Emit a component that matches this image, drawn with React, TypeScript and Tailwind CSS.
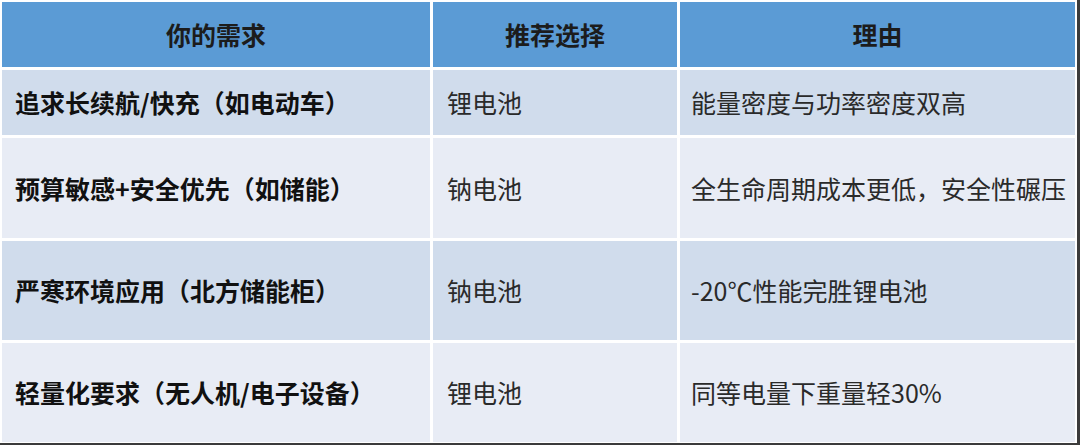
const rows = [
  { need: "追求长续航/快充（如电动车）", pick: "锂电池", why: "能量密度与功率密度双高" },
  { need: "预算敏感+安全优先（如储能）", pick: "钠电池", why: "全生命周期成本更低，安全性碾压" },
  { need: "严寒环境应用（北方储能柜）", pick: "钠电池", why: "-20℃性能完胜锂电池" },
  { need: "轻量化要求（无人机/电子设备）", pick: "锂电池", why: "同等电量下重量轻30%" },
];

export default function App() {
  return (
    <div
      className="w-[1080px] h-[445px] bg-white border-r-[3px] border-b-[2px] border-[#3b3b3b] pt-[2px] pl-[2px] pr-[2px] pb-[1px]"
      style={{ fontFamily: '"Noto Sans CJK SC", "Noto Sans", sans-serif' }}
    >
      <div className="grid grid-cols-[428px_244px_395px] grid-rows-[65px_65px_100px_99px_99px] gap-[3px] text-[25px] leading-none">
        <div className="flex items-center justify-center bg-[#5b9bd5] font-bold text-[#1c1c1c]">你的需求</div>
        <div className="flex items-center justify-center bg-[#5b9bd5] font-bold text-[#1c1c1c]">推荐选择</div>
        <div className="flex items-center justify-center bg-[#5b9bd5] font-bold text-[#1c1c1c]">理由</div>
        {rows.map((r, i) => {
          const bg = i % 2 === 0 ? "bg-[#d0dcec]" : "bg-[#e8ecf5]";
          return [
            <div key={r.need} className={`flex items-center pl-[13px] font-bold text-[#111] whitespace-nowrap ${bg}`}>
              {r.need}
            </div>,
            <div key={r.need + "p"} className={`flex items-center pl-[14px] text-[#2a2a2a] ${bg}`}>
              {r.pick}
            </div>,
            <div key={r.need + "w"} className={`flex items-center pl-[11px] text-[#2a2a2a] whitespace-nowrap ${bg}`}>
              {r.why}
            </div>,
          ];
        })}
      </div>
    </div>
  );
}
